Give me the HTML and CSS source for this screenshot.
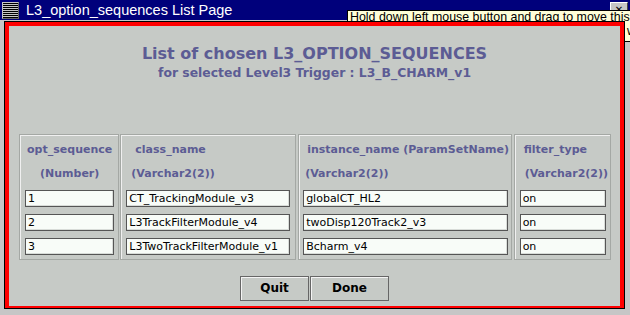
FILE: index.html
```html
<!DOCTYPE html>
<html lang="en">
<head>
    <meta charset="UTF-8">
    <title>L3_option_sequences List Page</title>
    <link rel="stylesheet" href="styles.css">
</head>
<body>
<div id="win">
    <div class="titlebar">
        <span class="menu-icon"></span>
        <span class="title">L3_option_sequences List Page</span>
        <span class="close-btn">&#x2715;</span>
    </div>

    <div class="tooltip">
        <div>Hold down left mouse button and drag to move this</div>
        <div class="tip-line2">w</div>
    </div>

    <div class="frame">
        <div class="heading">
            <div class="h1">List of chosen L3_OPTION_SEQUENCES</div>
            <div class="h2">for selected Level3 Trigger : L3_B_CHARM_v1</div>
        </div>

        <div class="grid">
            <div class="panel p-seq">
                <div class="lbl center">opt_sequence</div>
                <div class="lbl center">(Number)</div>
                <div class="field">1</div>
                <div class="field">2</div>
                <div class="field">3</div>
            </div>
            <div class="panel p-class">
                <div class="lbl l1">class_name</div>
                <div class="lbl l2">(Varchar2(2))</div>
                <div class="field">CT_TrackingModule_v3</div>
                <div class="field">L3TrackFilterModule_v4</div>
                <div class="field">L3TwoTrackFilterModule_v1</div>
            </div>
            <div class="panel p-inst">
                <div class="lbl l1">instance_name (ParamSetName)</div>
                <div class="lbl l2">(Varchar2(2))</div>
                <div class="field">globalCT_HL2</div>
                <div class="field">twoDisp120Track2_v3</div>
                <div class="field">Bcharm_v4</div>
            </div>
            <div class="panel p-filt">
                <div class="lbl l1">filter_type</div>
                <div class="lbl l2">(Varchar2(2))</div>
                <div class="field">on</div>
                <div class="field">on</div>
                <div class="field">on</div>
            </div>
        </div>

        <div class="buttons">
            <span class="btn quit">Quit</span>
            <span class="btn done">Done</span>
        </div>
    </div>
</div>
</body>
</html>
```

FILE: styles.css
```css
*{
    margin: 0;
    padding: 0;
    box-sizing: border-box;
}

body{
    width: 630px;
    height: 315px;
    overflow: hidden;
    background-color: #c6c6c6;
}

#win{
    position: relative;
    width: 630px;
    height: 315px;
    background-color: #c6c6c6;
    font-family: "DejaVu Sans", sans-serif;
}

.titlebar{
    height: 20px;
    background-color: #00007b;
    display: flex;
    align-items: center;
    margin-bottom: 1px;
}

.menu-icon{
    width: 17px;
    height: 17px;
    margin-left: 2px;
    background: repeating-linear-gradient(to bottom, #000 0 1px, #c6c6c6 1px 2px);
    border: 1px solid #c6c6c6;
    border-right-color: #666;
    border-bottom-color: #666;
}

.title{
    margin-left: 7px;
    color: white;
    font-family: "Liberation Sans", sans-serif;
    font-size: 14.5px;
}

.close-btn{
    position: absolute;
    right: 2px;
    top: 2px;
    width: 18px;
    height: 16px;
    background-color: #c6c6c6;
    border: 1px solid #fff;
    border-right-color: #444;
    border-bottom-color: #444;
    font-size: 10px;
    text-align: center;
    line-height: 14px;
}

.tooltip{
    position: absolute;
    left: 347px;
    top: 10px;
    width: 300px;
    height: 32px;
    background-color: #ffffd8;
    border: 1px solid #000;
    font-family: "Liberation Sans", sans-serif;
    font-size: 12.4px;
    line-height: 13px;
    padding: 0 2px;
    z-index: 3;
    white-space: nowrap;
}

.tip-line2{
    padding-left: 277px;
    margin-top: 1px;
}

.frame{
    position: relative;
    z-index: 4;
    margin-left: 4px;
    width: 621px;
    height: 288px;
    border: 1px solid #000;
    box-shadow: inset 0 0 0 4px #ff0000;
    padding: 4px;
}

.heading{
    height: 95px;
    background-color: #c6cac6;
    text-align: center;
    color: #5c5c94;
    font-weight: bold;
    padding-top: 17px;
}

.h1{
    font-size: 16px;
    line-height: 22px;
}

.h2{
    font-size: 12.4px;
    line-height: 15px;
}

.grid{
    display: flex;
    gap: 1px;
    background-color: #c6cac6;
    padding: 13px 9px 0 10px;
    height: 138px;
}

.panel{
    border: 1px solid #a4a8a4;
    box-shadow: inset 1px 1px 0 #f0f0f0;
    height: 126px;
    padding-top: 3px;
}

.p-seq{ width: 101px; padding-left: 5px; }
.p-class{ width: 177px; padding-left: 5px; }
.p-inst{ width: 215px; padding-left: 4px; margin-left: 1px; }
.p-filt{ width: 98px; padding-left: 5px; margin-left: 1px; }

.lbl{
    color: #5c5c94;
    font-size: 11px;
    font-weight: bold;
    line-height: 24px;
    white-space: nowrap;
}

.center{ text-align: center; padding-right: 4px; }

.p-class .l1{ padding-left: 9px; }
.p-class .l2{ padding-left: 5px; }
.p-inst .l1{ padding-left: 4px; }
.p-inst .l2{ padding-left: 2px; }
.p-filt .l1{ padding-left: 4px; }
.p-filt .l2{ padding-left: 5px; }

.field{
    height: 17px;
    background-color: #f8fcf8;
    border: 1px solid #555;
    box-shadow: inset -1px -1px 0 #d8dcd8;
    font-size: 11px;
    line-height: 15px;
    padding-left: 2px;
    color: #000;
    white-space: nowrap;
    overflow: hidden;
    margin-bottom: 7px;
}

.p-seq .field{ width: 89px; }
.p-class .field{ width: 164px; }
.p-inst .field{ width: 205px; }
.p-filt .field{ width: 86px; }

.panel .field:nth-child(3){ margin-top: 4px; }

.buttons{
    background-color: #c6cac6;
    height: 47px;
    display: flex;
    justify-content: center;
    padding-top: 17px;
    gap: 1px;
}

.btn{
    height: 25px;
    border: 1px solid #666;
    box-shadow: inset 1px 1px 0 #f4f4f4;
    font-size: 12px;
    font-weight: bold;
    text-align: center;
    line-height: 23px;
    color: #000;
}

.quit{ width: 69px; }
.done{ width: 79px; }
```
